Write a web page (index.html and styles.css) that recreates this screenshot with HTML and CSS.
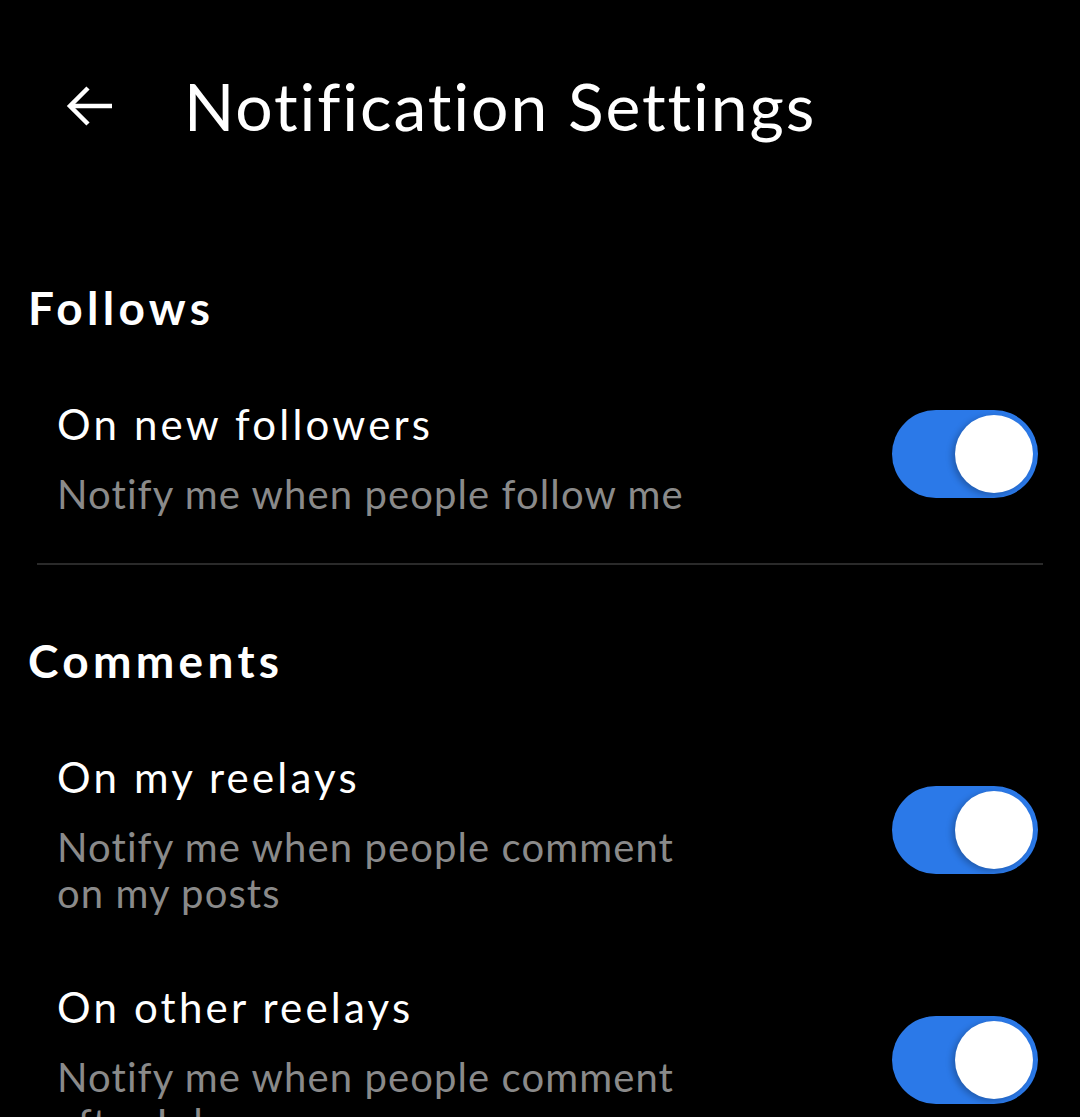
FILE: index.html
```html
<!DOCTYPE html>
<html lang="en">
<head>
<meta charset="utf-8">
<title>Notification Settings</title>
<link rel="stylesheet" href="styles.css">
</head>
<body>
<div class="screen">
  <header class="topbar">
    <button class="back" aria-label="Back">
      <svg width="48" height="42" viewBox="0 0 48 42" fill="none" stroke="#fff" stroke-width="4.5" stroke-linecap="butt" stroke-linejoin="miter">
        <path d="M46 21H4"/>
        <path d="M22 3L4 21L22 39"/>
      </svg>
    </button>
    <h1 class="title">Notification Settings</h1>
  </header>

  <section class="group">
    <h2 class="group-title">Follows</h2>
    <div class="item">
      <div class="item-text">
        <div class="item-title">On new followers</div>
        <div class="item-desc">Notify me when people follow me</div>
      </div>
      <div class="switch on"><span class="knob"></span></div>
    </div>
  </section>

  <div class="divider"></div>

  <section class="group">
    <h2 class="group-title">Comments</h2>
    <div class="item">
      <div class="item-text">
        <div class="item-title">On my reelays</div>
        <div class="item-desc">Notify me when people comment on my posts</div>
      </div>
      <div class="switch on"><span class="knob"></span></div>
    </div>
    <div class="item">
      <div class="item-text">
        <div class="item-title">On other reelays</div>
        <div class="item-desc">Notify me when people comment after I do</div>
      </div>
      <div class="switch on"><span class="knob"></span></div>
    </div>
  </section>
</div>
</body>
</html>
```

FILE: styles.css
```css
html, body {
  margin: 0;
  padding: 0;
  background: #000;
}
body {
  font-family: "Lato", "Noto Sans", sans-serif;
  color: #fff;
}
.screen {
  width: 1080px;
  height: 1117px;
  overflow: hidden;
  background: #000;
}
.topbar {
  display: flex;
  align-items: center;
  height: 212px;
  padding-left: 66px;
  box-sizing: border-box;
}
.back {
  background: none;
  border: 0;
  padding: 0;
  margin: 0;
  width: 48px;
  height: 42px;
  display: flex;
}
.title {
  margin: 0 0 0 70px;
  font-size: 66px;
  font-weight: 400;
  line-height: 1;
  letter-spacing: 1.9px;
}
.group {
  padding: 0 42px 0 0;
}
.group-title {
  margin: 68px 0 0 28px;
  font-size: 46px;
  font-weight: 700;
  line-height: 56px;
  letter-spacing: 4.3px;
}
.item {
  display: flex;
  align-items: center;
  justify-content: space-between;
  padding-left: 57px;
  margin-top: 63px;
}
.item + .item {
  margin-top: 66px;
}
.item-text {
  width: 650px;
}
.item-title {
  font-size: 42px;
  line-height: 50px;
  letter-spacing: 3.2px;
}
.item-desc {
  font-size: 40px;
  line-height: 46px;
  margin-top: 22px;
  color: #8a8a8a;
  letter-spacing: 1.1px;
}
.switch {
  width: 146px;
  height: 88px;
  border-radius: 44px;
  background: #2b79e8;
  position: relative;
  flex: none;
  margin-bottom: 8px;
}
.knob {
  position: absolute;
  top: 5px;
  right: 5px;
  width: 78px;
  height: 78px;
  border-radius: 50%;
  background: #fff;
  box-shadow: -3px 2px 6px rgba(0, 0, 0, 0.25);
}
.divider {
  height: 2px;
  background: #2a2a2a;
  margin: 46px 37px 0 37px;
}
```
